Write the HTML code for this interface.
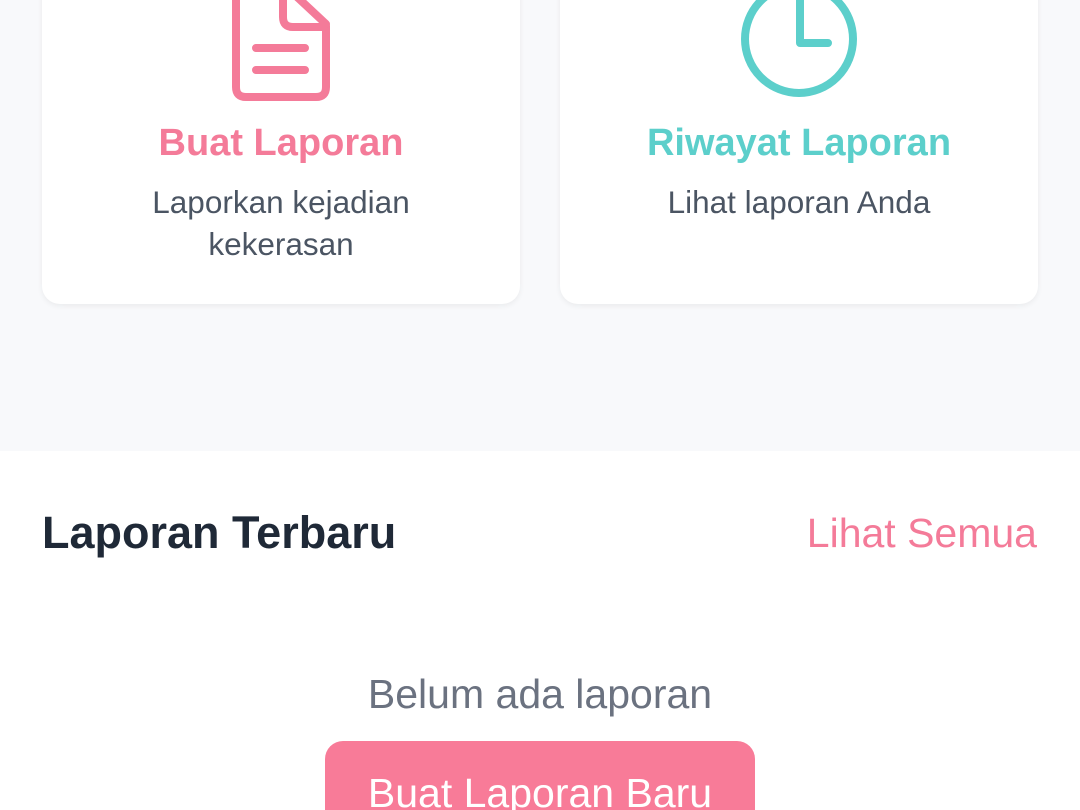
<!DOCTYPE html>
<html><head><meta charset="utf-8"><style>
*{margin:0;padding:0;box-sizing:border-box}
html,body{width:1080px;height:810px;overflow:hidden}
body{background:#fff;font-family:"Liberation Sans",Roboto,sans-serif;position:relative}
.top{position:absolute;left:0;top:0;width:1080px;height:451px;background:#f8f9fb}
.card{position:absolute;top:-40px;width:478px;height:344px;background:#fff;border-radius:18px;box-shadow:0 2px 6px rgba(0,0,0,0.06)}
.t{position:absolute;width:100%;text-align:center;white-space:nowrap}
svg{position:absolute;left:0;top:0}
</style></head><body>
<div class="top"></div>
<div class="card" style="left:42px"></div>
<div class="card" style="left:560px"></div>
<svg width="1080" height="810" fill="none" stroke-linecap="round" stroke-linejoin="round">
<g stroke="#f47b99" stroke-width="8">
<path d="M326 26 L326 87 Q326 97 316 97 L246 97 Q236 97 236 87 L236 -40"/>
<path d="M283 -10 L283 17 Q283 27 293 27 L324 27"/>
<path d="M296 -4 L326 24"/>
<path d="M256 48 H305 M256 70 H305"/>
</g>
<g stroke="#5ccfcb" stroke-width="8">
<circle cx="799" cy="39" r="54"/>
<path d="M800 -10 V43 H828"/>
</g>
</svg>
<div class="t" style="left:42px;width:478px;top:122px;font-size:38px;font-weight:bold;color:#f47b99">Buat Laporan</div>
<div class="t" style="left:42px;width:478px;top:181px;font-size:31.5px;color:#4b5563;line-height:42px">Laporkan kejadian<br>kekerasan</div>
<div class="t" style="left:560px;width:478px;top:122px;font-size:38px;font-weight:bold;color:#5ccfcb">Riwayat Laporan</div>
<div class="t" style="left:560px;width:478px;top:181px;font-size:31.5px;color:#4b5563;line-height:42px">Lihat laporan Anda</div>
<div style="position:absolute;left:42px;top:507px;font-size:45px;font-weight:bold;color:#1f2937">Laporan Terbaru</div>
<div style="position:absolute;right:43px;top:510px;font-size:41px;color:#f47b99">Lihat Semua</div>
<div class="t" style="left:0;top:671px;font-size:41px;color:#6b7280">Belum ada laporan</div>
<div style="position:absolute;left:325px;top:741px;width:430px;height:100px;background:#f87b98;border-radius:18px"></div>
<div class="t" style="left:325px;width:430px;top:770px;font-size:41px;color:#fff">Buat Laporan Baru</div>
</body></html>
